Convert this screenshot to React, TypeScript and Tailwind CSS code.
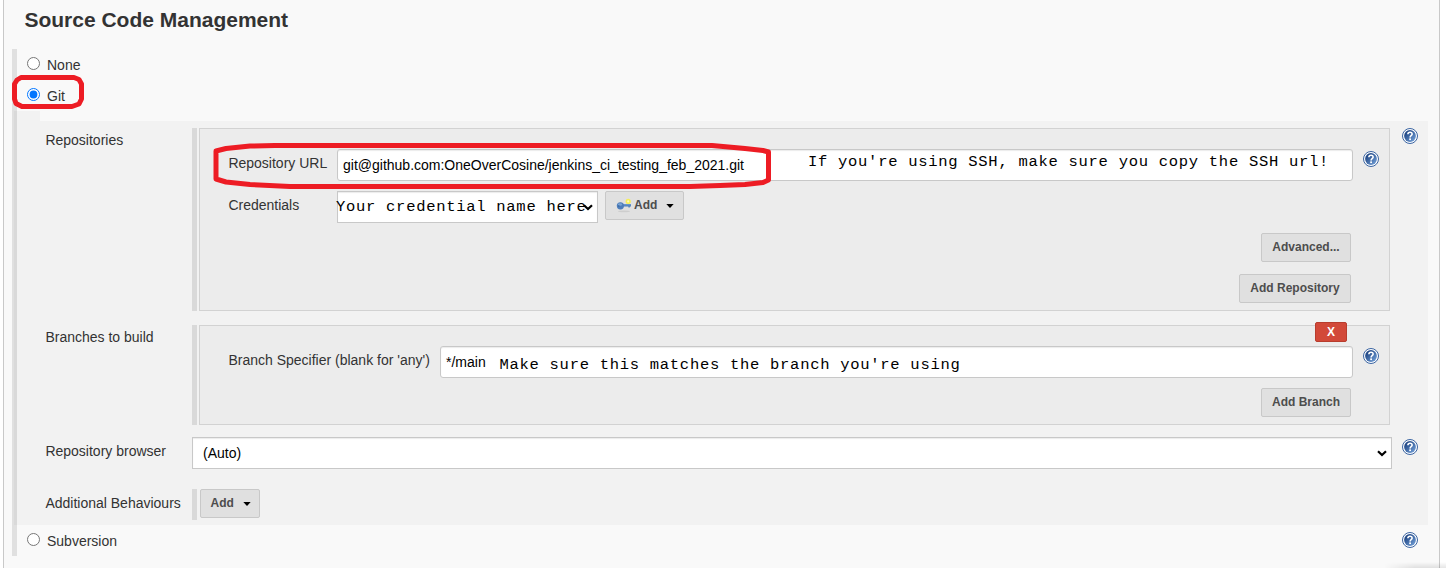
import type { ReactNode } from "react";

function HelpIcon({ className = "" }: { className?: string }) {
  return (
    <svg viewBox="0 0 16 16" className={`block h-4 w-4 shrink-0 ${className}`} aria-label="Help">
      <defs>
        <linearGradient id="helpFill" x1="0" y1="0" x2="1" y2="1">
          <stop offset="0.1" stopColor="#173d7c" />
          <stop offset="0.9" stopColor="#6f9cd4" />
        </linearGradient>
      </defs>
      <circle cx="8" cy="8" r="7.5" fill="#fff" stroke="#3a64a2" strokeWidth="1" />
      <circle cx="8" cy="8" r="5.9" fill="url(#helpFill)" />
      <path d="M5.9 6.2C5.9 3.5 10.2 3.6 10.1 6.1C10 7.7 8.1 7.7 8.1 9.4" fill="none" stroke="#fff" strokeWidth="1.6" />
      <rect x="7.2" y="10.4" width="1.8" height="1.7" fill="#fff" />
    </svg>
  );
}

function KeyIcon() {
  return (
    <svg viewBox="0 0 16 16" className="block h-4 w-4 shrink-0">
      <ellipse cx="8" cy="14.4" rx="6" ry="0.8" fill="#cdcdcd" />
      <circle cx="12.2" cy="4.4" r="2.6" fill="#f6ee58" />
      <circle cx="12.2" cy="4.4" r="1.1" fill="#fffbb8" />
      <path d="M7 7H15V9.6H13.800V10.600H12.400V9.600H7Z" fill="#4c7db9" />
      <path d="M7 7.800H15" stroke="#7fa9d9" strokeWidth="0.8" />
      <ellipse cx="4.4" cy="8.8" rx="3.6" ry="3.6" fill="#4d7dba" />
      <ellipse cx="4" cy="7.5" rx="2.2" ry="1.3" fill="#7aa4d4" />
      <circle cx="2.8" cy="9" r="0.8" fill="#34609c" />
    </svg>
  );
}

function Chevron({ className = "" }: { className?: string }) {
  return (
    <svg viewBox="0 0 10 7" className={`block h-[7px] w-[10px] shrink-0 ${className}`}>
      <path d="M1 1.3L5 5.1L9 1.3" fill="none" stroke="#000" strokeWidth="2.2" />
    </svg>
  );
}

function Caret({ className = "" }: { className?: string }) {
  return (
    <svg viewBox="0 0 8 4" className={`block h-1 w-2 shrink-0 ${className}`}>
      <path d="M0.300 0H7.700L4 4Z" fill="#000" />
    </svg>
  );
}

function Button({ children, className = "" }: { children: ReactNode; className?: string }) {
  return (
    <button
      className={`flex h-[29px] shrink-0 items-center rounded-[2px] border border-[#c8c8c8] bg-[#e0e0e0] pb-px text-[12px] font-bold text-[#4d4d4d] ${className}`}
    >
      {children}
    </button>
  );
}

function Option({ label, checked = false, className = "" }: { label: string; checked?: boolean; className?: string }) {
  return (
    <label className={`flex pl-[10px] ${className}`}>
      <input type="radio" name="scm" defaultChecked={checked} className="m-0 h-[13px] w-[13px] shrink-0" />
      <span className="ml-[7px] mt-px leading-[14px]">{label}</span>
    </label>
  );
}

function Note({ children, className = "" }: { children: ReactNode; className?: string }) {
  return (
    <span
      className={`whitespace-pre font-['Courier_New','Liberation_Mono',monospace] text-[15.5px] leading-5 tracking-[0.72px] text-black ${className}`}
    >
      {children}
    </span>
  );
}

const field = "flex shrink-0 border border-[#c8c8c8] bg-white text-black shadow-[inset_0_1px_1px_rgba(0,0,0,0.08)]";
const rowLabel = "w-[178px] shrink-0 pl-[31.4px] leading-4";
const box = "w-[1191px] shrink-0 border border-[#d2d2d2] bg-[#ececec] ml-[2px]";
const bar = "w-[5px] shrink-0 bg-[#d9d9d9]";

export default function App() {
  return (
    <div className="relative h-[568px] w-[1446px] overflow-hidden bg-white pl-[3px] font-['Liberation_Sans',Arial,sans-serif] text-[14px] text-[#333]">
      <main className="h-[568px] w-[1437px] border-x border-[#c9c9c9] bg-[#f9f9f9]">
        <h1 className="h-[49px] pl-[20.4px] pt-[8px] text-[21px] font-bold leading-6">Source Code Management</h1>
        <section className="ml-[8px] h-[507px] border-l-[5px] border-[#e0e0e0]">
          <Option label="None" className="h-[31px] pt-[8px]" />
          <Option label="Git" checked className="h-[31px] pt-[8px]" />
          <div className="-ml-[3px] h-[10px] w-[26px] bg-black/[0.027]" />
          <div className="-ml-[3px] flex h-[404px] w-[1414px] flex-col bg-black/[0.027] pt-[7px]">
            <div className="flex h-[197px]">
              <span className={`${rowLabel} pt-[4px]`}>Repositories</span>
              <div className={`${bar} h-[183px]`} />
              <div className={`${box} h-[183px] pt-[20px]`}>
                <div className="flex h-[42px] pl-[28.4px]">
                  <span className="w-[108.6px] shrink-0 pt-[6px] leading-4">Repository URL</span>
                  <div className={`${field} h-8 w-[1016px] rounded-[3px] pl-[5px]`}>
                    <span className="w-[465px] pt-[7px] leading-4">git@github.com:OneOverCosine/jenkins_ci_testing_feb_2021.git</span>
                    <Note className="pt-[2px]">If you're using SSH, make sure you copy the SSH url!</Note>
                  </div>
                  <HelpIcon className="ml-[10px] mt-[2px]" />
                </div>
                <div className="flex h-[42px] pl-[28.4px]">
                  <span className="w-[108.6px] shrink-0 pt-[6px] leading-4">Credentials</span>
                  <div className={`${field} h-8 w-[261px]`}>
                    <Note className="-ml-[2px] w-[247px] pt-[5px]">Your credential name here</Note>
                    <Chevron className="mt-[12px]" />
                  </div>
                  <Button className="ml-[7px] w-[79px] pl-[10px]">
                    <KeyIcon />
                    <span className="ml-[2px]">Add</span>
                    <Caret className="ml-[9px] mt-px" />
                  </Button>
                </div>
                <div className="flex flex-col items-end gap-[12px] pr-[38px]">
                  <Button className="w-[90px] justify-center">Advanced...</Button>
                  <Button className="w-[112px] justify-center">Add Repository</Button>
                </div>
              </div>
              <HelpIcon className="ml-[12px]" />
            </div>
            <div className="flex h-[112px]">
              <span className={`${rowLabel} pt-[4px]`}>Branches to build</span>
              <div className={`${bar} h-[100px]`} />
              <div className={`${box} relative h-[100px] pt-[20px]`}>
                <button className="absolute -top-[4px] right-[42px] h-5 w-8 rounded-[2px] border border-[#b83d2e] bg-[#d24939] text-[12px] font-bold leading-[18px] text-white">
                  X
                </button>
                <div className="flex h-[42px] pl-[28.4px]">
                  <span className="w-[211.6px] shrink-0 whitespace-nowrap pt-[6px] leading-4">Branch Specifier (blank for 'any')</span>
                  <div className={`${field} h-8 w-[913px] rounded-[3px] pl-[5px]`}>
                    <span className="w-[53.5px] pt-[7px] leading-4">*/main</span>
                    <Note className="pt-[8px]">Make sure this matches the branch you're using</Note>
                  </div>
                  <HelpIcon className="ml-[10px] mt-[2px]" />
                </div>
                <div className="flex justify-end pr-[38px]">
                  <Button className="w-[90px] justify-center">Add Branch</Button>
                </div>
              </div>
            </div>
            <div className="flex h-[52px]">
              <span className={`${rowLabel} pt-[6px]`}>Repository browser</span>
              <div className={`${field} h-8 w-[1200px] justify-between pl-[10px] pr-[4px]`}>
                <span className="pt-[7px] leading-4">(Auto)</span>
                <Chevron className="mt-[12px]" />
              </div>
              <HelpIcon className="ml-[10px] mt-[2px]" />
            </div>
            <div className="flex h-[36px]">
              <span className={`${rowLabel} pt-[6px]`}>Additional Behaviours</span>
              <div className={`${bar} h-[31px]`} />
              <Button className="ml-[3px] w-[60px] pl-[9.6px]">
                <span>Add</span>
                <Caret className="ml-[9px] mt-px" />
              </Button>
            </div>
          </div>
          <div className="flex w-[1401px] justify-between pt-[7px]">
            <Option label="Subversion" className="pt-px" />
            <HelpIcon />
          </div>
        </section>
      </main>
      <svg className="pointer-events-none absolute left-0 top-0" width="800" height="200" viewBox="0 0 800 200" fill="none" stroke="#ed1c24" strokeWidth="5" strokeLinejoin="round">
        <path d="M21 77.500H74L79 79.500L81.500 84V99L79 104L72 106.500H22L16 103.500L14.500 99V84L17 80Z" />
        <path d="M216 151L226 148.500L250 146L275 145.500L712 145.500L745 148.500L763 150.500L768.500 152V180L763 182.500L745 184.500L720 185.500L690 186.500H290L250 184.500L226 182L216 179Z" />
      </svg>
      <div className="absolute bottom-0 right-0 h-[6px] w-[62px] bg-linear-to-t from-black/10 to-transparent mask-l-from-50%" />
    </div>
  );
}
